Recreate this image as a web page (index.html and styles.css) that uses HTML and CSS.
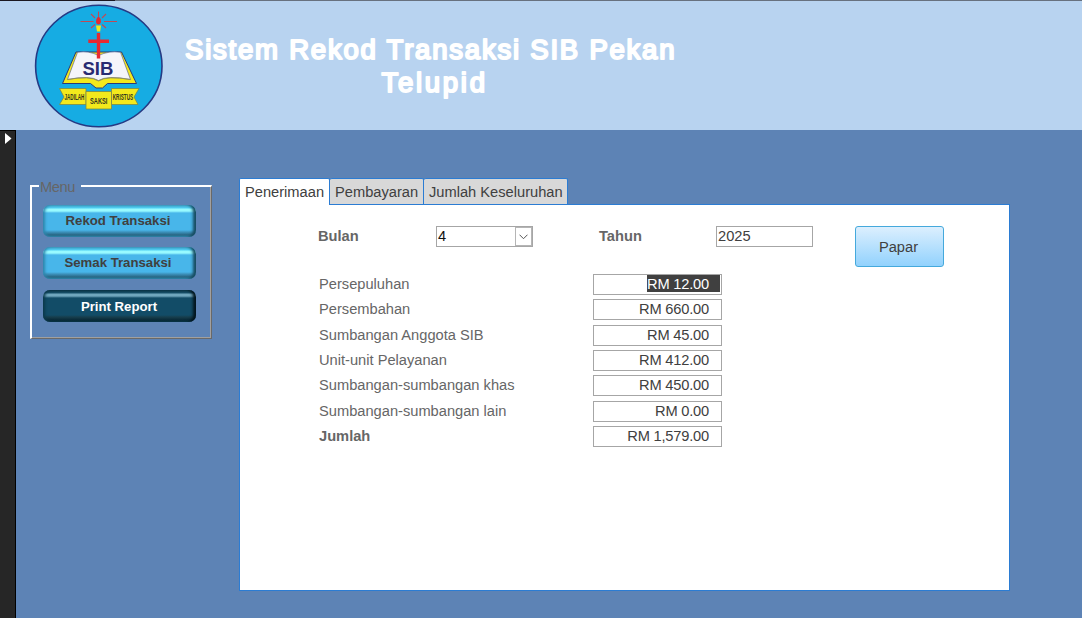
FILE: index.html
```html
<!DOCTYPE html>
<html lang="ms">
<head>
<meta charset="utf-8">
<title>Sistem Rekod Transaksi SIB Pekan Telupid</title>
<link rel="stylesheet" href="styles.css">
</head>
<body>
<header class="header">
  <svg class="logo" width="130" height="126" viewBox="34 3 130 126">
    <ellipse cx="98.8" cy="66" rx="63.2" ry="60.8" fill="#16ace3" stroke="#253a84" stroke-width="1.6"/>
    <g stroke="#c04a55" stroke-width="1.1">
      <path d="M80.500 21.500H93.500M104 21.500H117M98.500 11.500V16M91 14L95 18M106 14L102 18M91 28L95 24.500M106 28L102 24.500"/>
    </g>
    <path d="M98.500 16Q101.500 19 101 22Q100 24.500 98.500 24.500Q96.500 24.500 96 22Q95.500 19 98.500 16Z" fill="#e82930"/>
    <path d="M96 25.500H101L100.200 31.500H97Z" fill="#f3e91c"/>
    <path d="M76 52L62.500 83.500H90.500L96 88H102.500L107.500 83.500H136.500L121.500 52Z" fill="#f3e91c" stroke="#2c3977" stroke-width="1"/>
    <path d="M77.500 52.300Q89 50.500 98.500 55.500Q109 50.500 120.500 52.300L130.500 79.500Q107 75 98.500 80.500Q90 75 67.500 79.500Z" fill="#f5f5fa" stroke="#4a5488" stroke-width=".6"/>
    <path d="M67.500 79.500Q90 75.500 98.500 81Q107 75.500 130.500 79.500" fill="none" stroke="#8c8b55" stroke-width=".8"/>
    <path d="M96.800 33H100.200V39.500H109V43H100.200V58.500H96.800V43H88.300V39.500H96.800Z" fill="#e82930"/>
    <path d="M59.500 88.500H86V104.500H59.500L64 97ZM111.500 88.500H139L134 97L138 104.500H111.500Z" fill="#f3e91c" stroke="#7b8a45" stroke-width=".8"/>
    <path d="M86 91.500H111.500V109H86Z" fill="#f3e91c" stroke="#7b8a45" stroke-width=".8"/>
    <text class="logo-name" x="82.500" y="75">SIB</text>
    <g class="logo-motto">
      <text transform="translate(64.500 99.500) scale(.54 1)">JADILAH</text>
      <text transform="translate(90 103.500) scale(.67 1)">SAKSI</text>
      <text transform="translate(112.700 99.500) scale(.55 1)">KRISTUS</text>
    </g>
  </svg>
  <h1 class="title">
    <svg class="title-art" width="500" height="70" viewBox="0 0 500 70">
      <text x="5" y="27.500" textLength="489.500">Sistem Rekod Transaksi SIB Pekan</text>
      <text x="201.500" y="60.500" textLength="103.500">Telupid</text>
    </svg>
  </h1>
</header>
<div class="workspace">
  <aside class="nav-strip"><span class="nav-toggle"><svg width="8" height="12" viewBox="0 0 8 12"><path d="M0 0L6.500 5.500L0 11Z" fill="#fff"/></svg></span></aside>
  <section class="menu">
    <span class="menu-label">Menu</span>
    <button class="menu-btn">Rekod Transaksi</button>
    <button class="menu-btn">Semak Transaksi</button>
    <button class="menu-btn menu-btn-dark">Print Report</button>
  </section>
  <main class="tabs">
    <nav class="tab-row">
      <span class="tab tab-active">Penerimaan</span>
      <span class="tab tab-payment">Pembayaran</span>
      <span class="tab tab-total">Jumlah Keseluruhan</span>
    </nav>
    <div class="panel">
      <div class="filters">
        <b class="label-month">Bulan</b>
        <div class="field month">4<span class="drop"><svg width="9" height="6" viewBox="0 0 9 6"><path d="M.5 .7L4.500 4.700L8.500 .7" fill="none" stroke="#555"/></svg></span></div>
        <b class="label-year">Tahun</b>
        <div class="field year">2025</div>
        <button class="show-btn">Papar</button>
      </div>
      <div class="amounts">
        <span>Persepuluhan</span><div class="field amount"><span class="selected">RM 12.00</span></div>
        <span>Persembahan</span><div class="field amount">RM 660.00</div>
        <span>Sumbangan Anggota SIB</span><div class="field amount">RM 45.00</div>
        <span>Unit-unit Pelayanan</span><div class="field amount">RM 412.00</div>
        <span>Sumbangan-sumbangan khas</span><div class="field amount">RM 450.00</div>
        <span>Sumbangan-sumbangan lain</span><div class="field amount">RM 0.00</div>
        <b>Jumlah</b><div class="field amount">RM 1,579.00</div>
      </div>
    </div>
  </main>
</div>
</body>
</html>
```
FILE: styles.css
```css
* { box-sizing: border-box; }
body {
  margin: 0;
  width: 1082px;
  height: 618px;
  overflow: hidden;
  display: flex;
  flex-direction: column;
  background: #5d83b5;
  font: 14.67px/21px "Liberation Sans", Arial, sans-serif;
  color: #404040;
}
button { font-family: inherit; margin: 0; padding: 0; }

.header {
  height: 130px;
  flex: none;
  display: flex;
  align-items: flex-start;
  padding: 3px 0 0 34px;
  background: linear-gradient(90deg, #1b1720 115px, #67717f 115px) 0 0 / 100% 1px no-repeat, #b8d3f0;
}
.logo-name { font: bold 18.5px "Liberation Sans", Arial, sans-serif; fill: #292b72; }
.logo-motto { font: bold 8.5px "Liberation Sans", Arial, sans-serif; fill: #34351f; }
.title { margin: 28px 0 0 16px; line-height: 0; }
.title-art {
  font: 27.5px "Liberation Sans", Arial, sans-serif;
  fill: #fff;
  stroke: #fff;
  stroke-width: 2px;
  stroke-linejoin: round;
}

.workspace { flex: 1; display: flex; align-items: flex-start; }
.nav-strip {
  width: 16px;
  height: 100%;
  background: #262626;
  border: solid #000;
  border-width: 1px 1px 0 0;
}
.nav-toggle { display: block; padding: 2px 0 0 5px; line-height: 0; }

.menu {
  width: 182px;
  height: 154px;
  margin: 55px 0 0 14px;
  padding: 18px 0 0 11px;
  position: relative;
  border: 2px solid #fff;
  border-right: 1px solid #696969;
  border-bottom: 1px solid #696969;
  box-shadow: inset -1px -1px #a0a0a0;
}
.menu-label {
  position: absolute;
  left: 7px;
  top: -9px;
  width: 42px;
  padding-left: 1px;
  background: #5d83b5;
  color: #666;
  line-height: 18px;
  letter-spacing: -.4px;
}
.menu-btn {
  display: block;
  width: 153px;
  height: 32px;
  margin-bottom: 10px;
  padding: 0 3px 2px 0;
  border: 0;
  border-radius: 7px;
  font-size: 13.2px;
  font-weight: bold;
  color: #404040;
  background: linear-gradient(#45a9d0 0, #4fcdf2 3px, #98faff 4px, #98faff 6px, #48b6ea 8px, #48b6ea 25px, #3d92bc 27px, #286582 30px, #3291b5 32px);
  box-shadow: inset 3px 0 3px -1px #2d85ab, inset -4px 0 3px -1px #174b60;
}
.menu-btn-dark {
  margin-top: 11px;
  padding: 0 1px 0 0;
  color: #fff;
  background: linear-gradient(#0b394b 0, #174f68 3px, #70a6bd 4px, #70a6bd 6px, #124c67 8px, #124c67 25px, #173e4d 27px, #092a38 30px, #08384b 32px);
  box-shadow: inset 3px 0 3px -1px #0b394b, inset -4px 0 3px -1px #02141d;
}

.tabs { margin: 48px 0 0 27px; width: 771px; }
.tab-row { display: flex; height: 26px; }
.tab {
  height: 26px;
  padding: 3px 0 0 5px;
  border: 1px solid #2b7cd3;
  border-width: 1px 1px 0 0;
  border-radius: 2px 2px 0 0;
  background: #d8d8d8;
  white-space: nowrap;
}
.tab-active {
  width: 91px;
  height: 27px;
  border-left-width: 1px;
  background: #fff;
  position: relative;
}
.tab-payment { width: 94px; }
.tab-total { width: 144px; }
.panel {
  height: 387px;
  border: 1px solid #2b7cd3;
  background: #fff;
  padding: 21px 0 0 79px;
}
.filters { display: flex; height: 48px; color: #666; }
.filters .field { color: #404040; }
.label-month { width: 118px; margin-left: -1px; }
.label-year { width: 117px; margin-left: 66px; }
.field { height: 21px; border: 1px solid #a6a6a6; line-height: 18px; background: #fff; white-space: nowrap; }
.filters .month { width: 97px; display: flex; justify-content: space-between; padding-left: 1px; color: #111; }
.drop { width: 17px; height: 19px; border: 1px solid #b5b5b5; display: grid; place-items: center; line-height: 0; }
.year { width: 97px; padding-left: 1px; }
.show-btn {
  width: 89px;
  height: 41px;
  margin-left: 42px;
  padding-right: 2px;
  border: 1px solid #45a9dc;
  border-radius: 3px;
  background: linear-gradient(#dceffe, #92d2fd);
  font-size: 14.67px;
  color: #404040;
}
.amounts {
  display: grid;
  grid-template-columns: 274px 129px;
  grid-auto-rows: 25.333px;
  color: #666;
}
.amount { padding: 0 12px 0 0; text-align: right; color: #404040; letter-spacing: -.2px; }
.selected { display: inline-block; height: 17px; line-height: 18px; margin-right: -11px; padding-right: 11px; background: #404040; color: #fff; }
```
